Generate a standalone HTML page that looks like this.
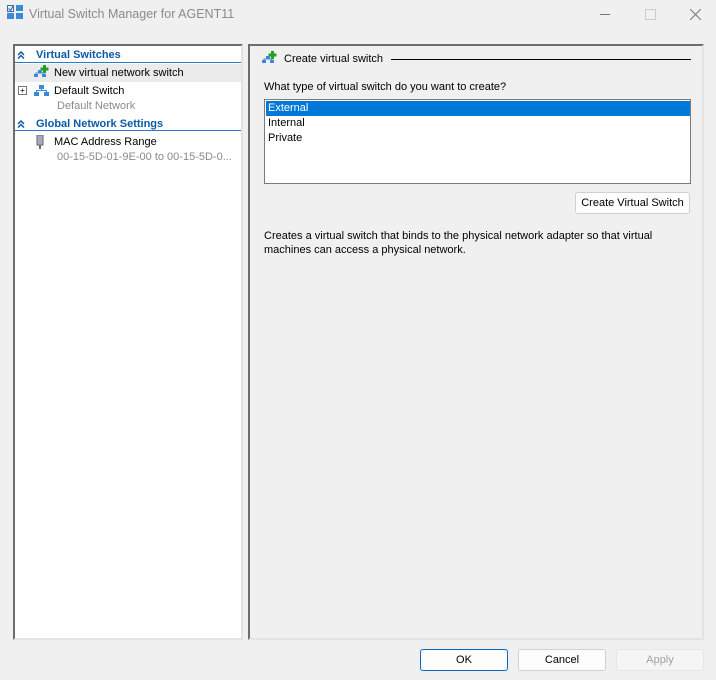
<!DOCTYPE html>
<html><head><style>
body{margin:0;width:716px;height:680px;background:#f0f0f0;font-family:"Liberation Sans",sans-serif;font-size:11px;color:#000;position:relative;overflow:hidden}
.a{position:absolute;white-space:nowrap}
.panel{position:absolute;box-sizing:border-box;border-top:2px solid #6d6d6d;border-left:2px solid #6d6d6d;border-right:2px solid #e3e3e3;border-bottom:2px solid #e3e3e3}
.hdr{color:#0a5aa8;font-weight:bold;font-size:11px}
.btn{position:absolute;box-sizing:border-box;border:1px solid #d0d0d0;border-radius:3px;background:#fdfdfd;text-align:center;font-size:11px;line-height:21px}
</style></head><body>
<svg class="a" style="left:7px;top:5px" width="17" height="15"><rect x="0.5" y="0.5" width="6" height="6" fill="none" stroke="#4a6a9a"/><path d="M1.5 3.5l2 2 3-5" stroke="#2a70c0" fill="none" stroke-width="1.2"/><rect x="9" y="0" width="7" height="6" fill="#3a8ad6"/><rect x="0" y="8" width="7" height="6" fill="#3a8ad6"/><rect x="9" y="8" width="7" height="6" fill="#3a8ad6"/></svg>
<div class="a" style="left:29px;top:7px;font-size:12.5px;color:#8a8a8a">Virtual Switch Manager for AGENT11</div>
<div class="a" style="left:600px;top:14px;width:10px;height:1px;background:#777"></div>
<div class="a" style="left:645px;top:9px;width:9px;height:9px;border:1px solid #ccc"></div>
<svg class="a" style="left:690px;top:9px" width="11" height="11"><path d="M0 0L11 11M11 0L0 11" stroke="#777" stroke-width="1"/></svg>
<div class="panel" style="left:13px;top:44px;width:230px;height:596px;background:#fff"></div>
<div class="a" style="left:15px;top:62px;width:226px;height:1px;background:#2a7bd0"></div>
<div class="a" style="left:15px;top:130px;width:226px;height:1px;background:#2a7bd0"></div>
<div class="a" style="left:15px;top:64px;width:226px;height:18px;background:#ebebeb"></div>
<svg class="a" style="left:17px;top:51px" width="8" height="8"><path d="M1 4l3-3 3 3M1 7.5l3-3 3 3" stroke="#0a5aa8" stroke-width="1.5" fill="none"/></svg>
<div class="a hdr" style="left:36px;top:49px">Virtual Switches</div>
<svg class="a" style="left:33px;top:65px" width="17" height="14"><rect x="10" y="0" width="3" height="8" fill="#22a022"/><rect x="7.5" y="2.5" width="8" height="3" fill="#22a022"/><rect x="1" y="9" width="4" height="3" fill="#3a8ad6"/><rect x="9" y="9" width="4" height="3" fill="#3a8ad6"/><rect x="5" y="5" width="4" height="3" fill="#3a8ad6"/><path d="M3 9V8h8v1" stroke="#3a8ad6" fill="none"/></svg>
<div class="a" style="left:54px;top:67px">New virtual network switch</div>
<div class="a" style="left:18px;top:86px;width:7px;height:7px;border:1px solid #777;font-size:8px;line-height:7px;text-align:center">+</div>
<svg class="a" style="left:33px;top:83px" width="17" height="14"><rect x="6" y="2" width="5" height="4" fill="#3a8ad6"/><rect x="1" y="9" width="5" height="4" fill="#3a8ad6"/><rect x="11" y="9" width="5" height="4" fill="#3a8ad6"/><path d="M3.5 9V7.5h10V9M8.5 6v2" stroke="#3a8ad6" fill="none"/></svg>
<div class="a" style="left:54px;top:85px">Default Switch</div>
<div class="a" style="left:57px;top:100px;color:#8a8a8a">Default Network</div>
<svg class="a" style="left:17px;top:120px" width="8" height="8"><path d="M1 4l3-3 3 3M1 7.5l3-3 3 3" stroke="#0a5aa8" stroke-width="1.5" fill="none"/></svg>
<div class="a hdr" style="left:36px;top:118px">Global Network Settings</div>
<svg class="a" style="left:36px;top:135px" width="8" height="15"><rect x="1" y="0" width="6" height="10" fill="#aab" stroke="#667"/><rect x="3" y="10" width="2" height="4" fill="#667"/></svg>
<div class="a" style="left:54px;top:136px">MAC Address Range</div>
<div class="a" style="left:57px;top:151px;color:#8a8a8a">00-15-5D-01-9E-00 to 00-15-5D-0...</div>
<div class="panel" style="left:248px;top:44px;width:456px;height:596px"></div>
<svg class="a" style="left:261px;top:51px" width="17" height="14"><rect x="10" y="0" width="3" height="8" fill="#22a022"/><rect x="7.5" y="2.5" width="8" height="3" fill="#22a022"/><rect x="1" y="9" width="4" height="3" fill="#3a8ad6"/><rect x="9" y="9" width="4" height="3" fill="#3a8ad6"/><rect x="5" y="5" width="4" height="3" fill="#3a8ad6"/><path d="M3 9V8h8v1" stroke="#3a8ad6" fill="none"/></svg>
<div class="a" style="left:284px;top:53px">Create virtual switch</div>
<div class="a" style="left:391px;top:59px;width:300px;height:1px;background:#000"></div>
<div class="a" style="left:264px;top:81px">What type of virtual switch do you want to create?</div>
<div class="a" style="left:264px;top:99px;width:427px;height:85px;box-sizing:border-box;border:1px solid #7a7a7a;background:#fff"></div>
<div class="a" style="left:266px;top:101px;width:424px;height:15px;background:#0078d7"></div>
<div class="a" style="left:268px;top:102px;color:#fff">External</div>
<div class="a" style="left:268px;top:117px">Internal</div>
<div class="a" style="left:268px;top:132px">Private</div>
<div class="btn" style="left:575px;top:192px;width:115px;height:22px">Create Virtual Switch</div>
<div class="a" style="left:264px;top:230px;line-height:13.5px">Creates a virtual switch that binds to the physical network adapter so that virtual<br>machines can access a physical network.</div>
<div class="btn" style="left:420px;top:649px;width:88px;height:22px;border-color:#0067c0">OK</div>
<div class="btn" style="left:518px;top:649px;width:88px;height:22px">Cancel</div>
<div class="btn" style="left:616px;top:649px;width:88px;height:22px;background:#f5f5f5;color:#a0a0a0;border-color:#e5e5e5">Apply</div>
</body></html>
